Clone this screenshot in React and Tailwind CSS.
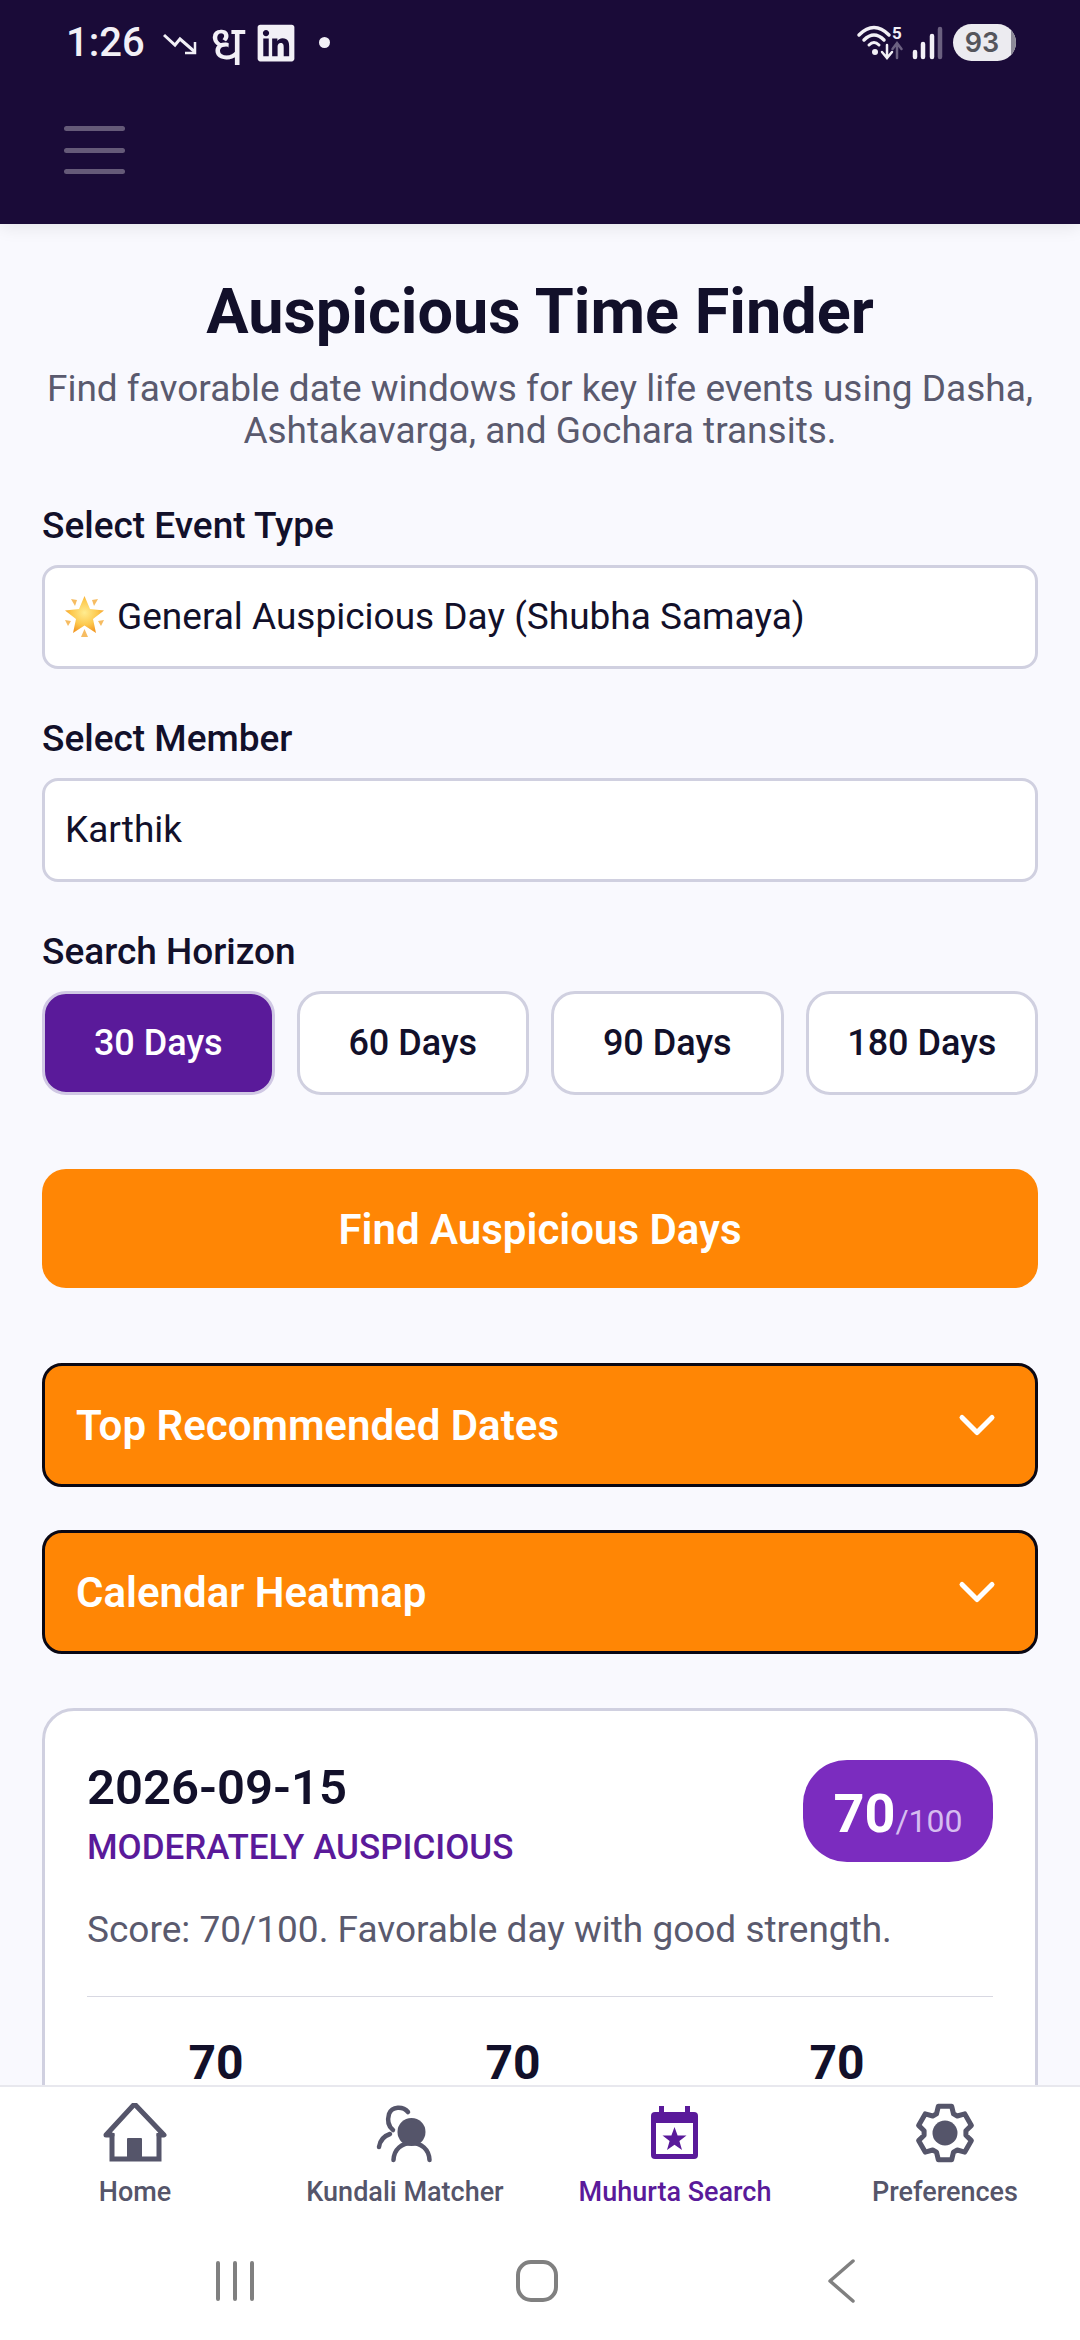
import React from "react";
import { ChevronDown } from "lucide-react";
import { FaLinkedin } from "react-icons/fa";

function gearPoints() {
  const pts = [];
  for (let i = 0; i < 6; i++) {
    const a = -90 + i * 60;
    [[-24, 21], [-14, 27.5], [14, 27.5], [24, 21]].forEach(([d, r]) => {
      const t = ((a + d) * Math.PI) / 180;
      pts.push(`${(32 + r * Math.cos(t)).toFixed(1)},${(32 + r * Math.sin(t)).toFixed(1)}`);
    });
  }
  return pts.join(" ");
}

const HomeIcon = () => (
  <svg width="64" height="62" viewBox="0 3 64 62" fill="none" stroke="#55556a" strokeWidth="5">
    <path d="M9 35H3L31.5 4L61 35H56" strokeLinejoin="round" strokeLinecap="round" />
    <path d="M9 33V59H56V33" />
    <rect x="24" y="38" width="15" height="21" rx="1" fill="#55556a" stroke="none" />
  </svg>
);

const KundaliIcon = () => (
  <svg width="60" height="62" viewBox="0 0 60 62" fill="none" stroke="#55556a" strokeWidth="4.5" strokeLinecap="round">
    <circle cx="36.5" cy="29" r="14" fill="#55556a" stroke="none" />
    <path d="M18.5 57C19 46 27 40 36.5 40C46 40 54 46 54.5 57" />
    <path d="M33 9C28 3 17 3 14 11C12 18 13 23 18 27" />
    <path d="M4 44C5 37 9 33 15 31" />
  </svg>
);

const CalendarIcon = () => (
  <svg width="48" height="54" viewBox="0 0 48 54" className="mt-[3px]">
    <rect x="8" y="0" width="5" height="8" fill="#5a1a9a" />
    <rect x="34" y="0" width="5" height="8" fill="#5a1a9a" />
    <rect x="0" y="6" width="47" height="47" rx="4" fill="#5a1a9a" />
    <rect x="5" y="17" width="37" height="31" fill="#fff" />
    <polygon points="23.5,21 26.6,29.5 35.5,29.5 28.4,35 31,44 23.5,38.7 16,44 18.6,35 11.5,29.5 20.4,29.5" fill="#5a1a9a" />
  </svg>
);

const GearIcon = () => (
  <svg width="64" height="64" viewBox="0 0 64 64" fill="none" className="-mt-[2px]">
    <polygon points={gearPoints()} stroke="#55556a" strokeWidth="5" strokeLinejoin="round" />
    <circle cx="32" cy="32" r="12.5" fill="#55556a" />
  </svg>
);

const StarEmoji = () => (
  <svg width="40" height="42" viewBox="0 0 40 42" className="shrink-0">
    <defs>
      <radialGradient id="glow" cx="0.5" cy="0.45" r="0.55">
        <stop offset="0" stopColor="#ffec8f" />
        <stop offset="0.6" stopColor="#fdc94e" />
        <stop offset="1" stopColor="#f39a25" />
      </radialGradient>
    </defs>
    <polygon points="19.5,0 25,13 39,14.5 28,23 31,37 19.5,29.5 8,37 11,23 0,14.5 14,13" fill="url(#glow)" />
    <g fill="#f6bc62">
      <polygon points="6,3 12,4 10,10" />
      <polygon points="33,3 27,4 29,10" />
      <polygon points="0,24 6,25 3,30" />
      <polygon points="39,24 33,25 36,30" />
      <polygon points="19.5,33 23,41 16,41" />
    </g>
  </svg>
);

const StatusLeft = () => (
  <div className="flex items-center h-[37px]">
    <span className="text-[40px] leading-[40px] font-medium text-[#f2f0f6] w-[97px]">1:26</span>
    <svg width="34" height="24" viewBox="0 0 34 24" fill="none" stroke="#f2f0f6" strokeWidth="3">
      <path d="M1 4L12 14L17 8L32 21" />
      <path d="M32 11V22H22" strokeWidth="2.5" />
    </svg>
    <span className="ml-[13px] w-[36px] text-[56px] leading-[40px] text-[#f2f0f6] font-['Noto_Sans','DejaVu_Sans',sans-serif]">ध</span>
    <FaLinkedin className="ml-[9px] text-[#f2f0f6]" size={42} />
    <span className="ml-[22px] w-[11px] h-[11px] rounded-full bg-[#f2f0f6]" />
  </div>
);

const StatusRight = () => (
  <div className="flex items-start h-[37px]">
    <svg width="46" height="38" viewBox="0 -1 46 38" fill="none" stroke="#f2f0f6" strokeLinecap="round" className="overflow-visible">
      <path d="M2 10Q17 -5 32 10" strokeWidth="3.5" />
      <path d="M7 15Q17 5 27 15" strokeWidth="3.5" />
      <path d="M12 20Q17 15 22 20" strokeWidth="3" />
      <circle cx="18" cy="27" r="3" fill="#f2f0f6" stroke="none" />
      <path d="M30 20V32M25 27L30 33L35 27" strokeWidth="2.5" />
      <path d="M40 33V19M35.5 24L40 18L44.5 24" strokeWidth="2.5" stroke="#6b6080" />
      <text x="40" y="14" textAnchor="middle" fontSize="17" fontWeight="700" fill="#f2f0f6" stroke="none" fontFamily="Roboto, sans-serif">5</text>
    </svg>
    <svg width="31" height="37" viewBox="0 0 31 37" className="ml-[9px]" strokeLinecap="round" strokeWidth="4.5">
      <path d="M3 33V28" stroke="#f2f0f6" />
      <path d="M11 33V20" stroke="#f2f0f6" />
      <path d="M20 33V12" stroke="#f2f0f6" />
      <path d="M28 33V5" stroke="#6b6080" />
    </svg>
    <div className="ml-[10px] w-[63px] h-[37px] rounded-full bg-[#ecebf0] overflow-hidden flex items-center">
      <span className="w-[58px] h-full flex items-center justify-center text-[27px] font-semibold text-[#55555c] font-['Inter',sans-serif] leading-none">93</span>
      <span className="w-[5px] h-full bg-[#8d8a98]" />
    </div>
  </div>
);

const Label = ({ children }) => (
  <div className="h-[40px] leading-[42px] text-[37px] font-medium text-[#12102a]">{children}</div>
);

const Field = ({ children }) => (
  <div className="mt-[20px] h-[104px] rounded-[16px] border-[3px] border-[#d0d0e0] bg-white flex items-center gap-[12px] pl-[20px] text-[37px] text-[#12102a]">
    {children}
  </div>
);

const DayButton = ({ active, children }) => (
  <div
    className={
      active
        ? "h-[104px] rounded-[24px] border-[3px] border-[#d0c8e4] bg-[#5a1a9a] text-white flex items-center justify-center text-[36px] font-medium"
        : "h-[104px] rounded-[24px] border-[3px] border-[#d0d0e0] bg-white text-[#12102a] flex items-center justify-center text-[36px] font-medium"
    }
  >
    {children}
  </div>
);

const Accordion = ({ children, className }) => (
  <div className={`h-[124px] rounded-[20px] border-[3px] border-[#0a0814] bg-[#ff8605] flex items-center justify-between pl-[31px] pr-[28px] ${className}`}>
    <span className="text-[42px] font-semibold text-white">{children}</span>
    <ChevronDown color="#ffffff" size={60} strokeWidth={2} />
  </div>
);

const Tab = ({ icon, label, active }) => (
  <div className="flex flex-col items-center">
    <div className="h-[66px] flex items-start justify-center">{icon}</div>
    <div className={active ? "mt-[5px] text-[27px] leading-[36px] font-medium text-[#5a1a9a]" : "mt-[5px] text-[27px] leading-[36px] font-medium text-[#55556a]"}>{label}</div>
  </div>
);

export default function App() {
  return (
    <div className="w-[1080px] h-[2340px] flex flex-col overflow-hidden bg-[#f9f9fe] font-['Roboto',sans-serif]">
      <header className="h-[224px] shrink-0 bg-[#1a0b38] pl-[64px] pr-[62px] shadow-[0_4px_16px_rgba(0,0,0,0.08)] relative z-10">
        <div className="h-[92px] pt-[24px] flex items-start justify-between pl-[2px] pr-[2px]">
          <StatusLeft />
          <StatusRight />
        </div>
        <div className="mt-[34px] flex flex-col gap-[16.5px] w-[61px]">
          <div className="h-[5px] rounded-full bg-[#655a78]" />
          <div className="h-[5px] rounded-full bg-[#655a78]" />
          <div className="h-[5px] rounded-full bg-[#655a78]" />
        </div>
      </header>

      <main className="flex-1 min-h-0 overflow-hidden px-[42px]">
        <h1 className="mt-[52px] h-[72px] leading-[72px] text-center text-[63px] font-bold text-[#12102a]">Auspicious Time Finder</h1>
        <p className="mt-[20px] text-center text-[37px] leading-[42px] text-[#5a5a6e]">
          Find favorable date windows for key life events using Dasha,
          <br />
          Ashtakavarga, and Gochara transits.
        </p>

        <div className="mt-[53px]">
          <Label>Select Event Type</Label>
          <Field>
            <StarEmoji />
            <span>General Auspicious Day (Shubha Samaya)</span>
          </Field>
        </div>
        <div className="mt-[49px]">
          <Label>Select Member</Label>
          <Field>Karthik</Field>
        </div>
        <div className="mt-[49px]">
          <Label>Search Horizon</Label>
          <div className="mt-[20px] grid grid-cols-4 gap-[22px]">
            <DayButton active>30 Days</DayButton>
            <DayButton>60 Days</DayButton>
            <DayButton>90 Days</DayButton>
            <DayButton>180 Days</DayButton>
          </div>
        </div>

        <div className="mt-[74px] h-[119px] rounded-[24px] bg-[#ff8605] flex items-center justify-center pt-[2px] text-[42px] font-semibold text-white">Find Auspicious Days</div>

        <Accordion className="mt-[75px]">Top Recommended Dates</Accordion>
        <Accordion className="mt-[43px]">Calendar Heatmap</Accordion>

        <section className="mt-[54px] rounded-[32px] border-[3px] border-[#d0d0e0] bg-white px-[42px] pt-[49px] pb-[200px]">
          <div className="flex justify-between">
            <div>
              <div className="h-[56px] leading-[56px] text-[49px] font-semibold text-[#12102a]">2026-09-15</div>
              <div className="mt-[12px] h-[40px] leading-[40px] text-[35px] font-medium text-[#5a1a9a]">MODERATELY AUSPICIOUS</div>
            </div>
            <div className="w-[190px] h-[102px] rounded-[44px] bg-[#7b2cbf] flex items-baseline justify-center pt-[22px] text-white">
              <span className="text-[54px] leading-[64px] font-bold">70</span>
              <span className="text-[32px] text-[#d6bdf0]">/100</span>
            </div>
          </div>
          <p className="mt-[38px] text-[37px] leading-[48px] text-[#5a5a6e]">Score: 70/100. Favorable day with good strength.</p>
          <div className="mt-[42px] h-[1px] bg-[#d8d8e2]" />
          <div className="mt-[38px] grid grid-cols-[258px_336px_312px] text-center text-[48px] leading-[56px] font-bold text-[#12102a]">
            <div>70</div>
            <div>70</div>
            <div>70</div>
          </div>
        </section>
      </main>

      <nav className="h-[255px] shrink-0 bg-white border-t-[2px] border-[#e8e8ee] relative z-10">
        <div className="grid grid-cols-4 pt-[16px]">
          <Tab icon={<HomeIcon />} label="Home" />
          <Tab icon={<KundaliIcon />} label="Kundali Matcher" />
          <Tab icon={<CalendarIcon />} label="Muhurta Search" active />
          <Tab icon={<GearIcon />} label="Preferences" />
        </div>
        <div className="mt-[49px] flex items-center pl-[215px]">
          <svg width="40" height="42" viewBox="0 0 40 42" stroke="#808080" strokeWidth="4" strokeLinecap="round">
            <path d="M3 3V39M20 3V39M37 3V39" />
          </svg>
          <svg width="44" height="42" viewBox="0 0 44 42" fill="none" stroke="#808080" strokeWidth="4" className="ml-[260px]">
            <rect x="3" y="2" width="38" height="38" rx="13" />
          </svg>
          <svg width="28" height="44" viewBox="0 0 28 44" fill="none" stroke="#808080" strokeWidth="3.5" strokeLinecap="round" strokeLinejoin="round" className="ml-[268px]">
            <path d="M26 2L3 22L26 42" />
          </svg>
        </div>
      </nav>
    </div>
  );
}
